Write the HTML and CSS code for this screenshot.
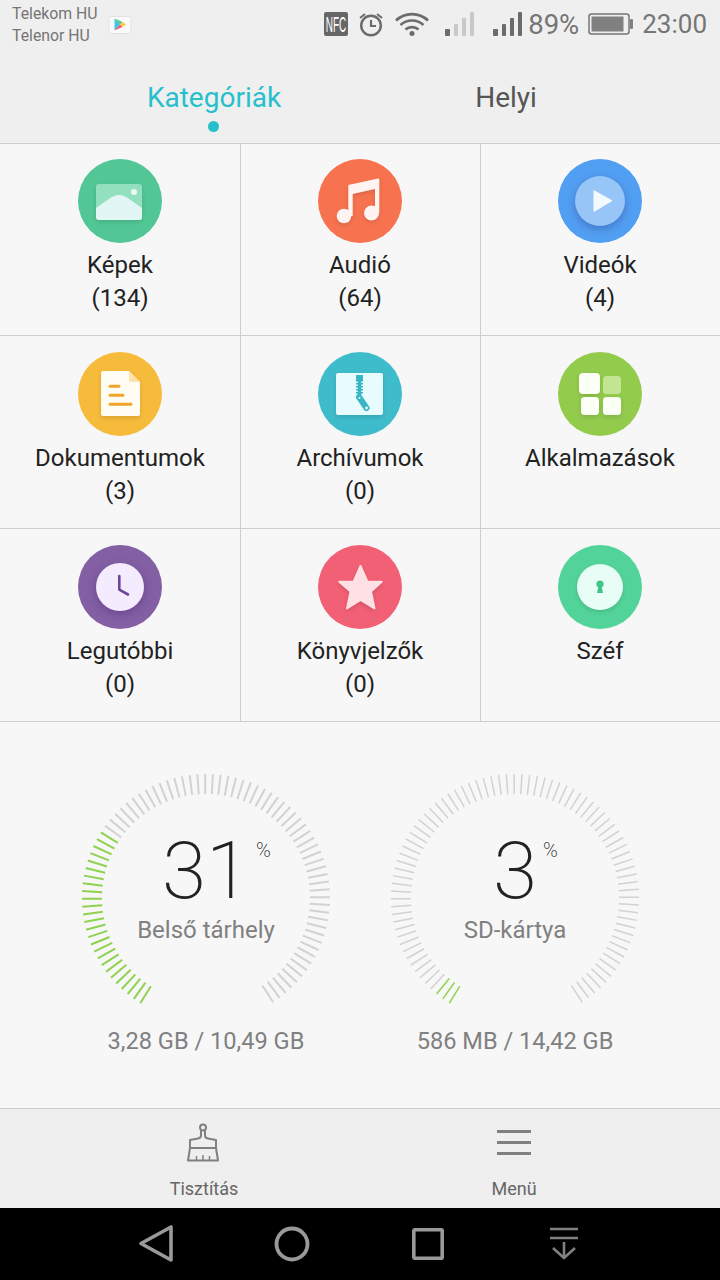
FILE: index.html
```html
<!DOCTYPE html>
<html lang="hu">
<head>
  <meta charset="UTF-8">
  <meta name="viewport" content="width=device-width, initial-scale=1.0">
  <title>Fájlok</title>
  <link rel="stylesheet" href="styles.css">
</head>
<body>
  <div class="app">
    <header class="top">
      <div class="status">
        <div class="carriers">
          <div>Telekom HU</div>
          <div>Telenor HU</div>
        </div>
        <svg class="play" width="24" height="20" viewBox="0 0 24 20">
          <rect x="1" y="2.500" width="22" height="17" rx="1.500" fill="#fafafa" stroke="#e2e2e2"/>
          <path d="M6.500 4.500v12l5.500-6z" fill="#3fc6e8"/>
          <path d="M6.500 4.500l5.500 6 2.500-2.500z" fill="#52c98a"/>
          <path d="M6.500 16.500l5.500-6 2.500 2.500z" fill="#ef5a6f"/>
          <path d="M14.500 8l3.500 2.500-3.500 2.500-2.500-2.500z" fill="#fbc93f"/>
        </svg>
        <div class="status-right">
          <svg class="nfc" width="24" height="24" viewBox="0 0 24 24">
            <rect width="24" height="24" rx="2" fill="#666"/>
            <text transform="translate(12 20) scale(1 2.200)" text-anchor="middle" class="nfc-label">NFC</text>
          </svg>
          <svg class="alarm" width="26" height="26" viewBox="0 0 26 26" fill="none" stroke="#6b6b6b">
            <circle cx="13" cy="14.500" r="9.800" stroke-width="2.400"/>
            <path d="M13 9v6h5" stroke-width="2.200"/>
            <path d="M2 7l5-4M24 7l-5-4" stroke-width="2"/>
          </svg>
          <svg class="wifi" width="34" height="24" viewBox="0 0 34 24" fill="none" stroke="#6b6b6b" stroke-width="2.600">
            <path d="M1 8.500c9-8.500 23-8.500 32 0"/>
            <path d="M5.500 13c6.500-6 16.500-6 23 0"/>
            <path d="M10.500 17.500c3.500-3.200 9.500-3.200 13 0"/>
            <circle cx="17" cy="21.500" r="2.500" fill="#6b6b6b" stroke="none"/>
          </svg>
          <svg class="signal-weak" width="29" height="24" viewBox="0 0 29 24">
            <rect x="0" y="17" width="5" height="7" rx="1" fill="#6b6b6b"/>
            <rect x="9" y="12" width="4" height="12" rx="1" fill="#c8c8c8"/>
            <rect x="17" y="6" width="4" height="18" rx="1" fill="#c8c8c8"/>
            <rect x="25" y="0" width="4" height="24" rx="1" fill="#c8c8c8"/>
          </svg>
          <svg class="signal-full" width="29" height="24" viewBox="0 0 29 24" fill="#6b6b6b">
            <rect x="0" y="17" width="5" height="7" rx="1"/>
            <rect x="9" y="12" width="4" height="12" rx="1"/>
            <rect x="17" y="6" width="4" height="18" rx="1"/>
            <rect x="25" y="0" width="4" height="24" rx="1"/>
          </svg>
          <span class="battery-pct">89%</span>
          <svg class="battery" width="45" height="22" viewBox="0 0 45 22">
            <rect x="1" y="1" width="40" height="20" rx="2.500" fill="none" stroke="#757575" stroke-width="1.500"/>
            <rect x="3.500" y="3.500" width="32" height="15" fill="#808080"/>
            <rect x="42" y="6" width="3" height="10" rx="1" fill="#808080"/>
          </svg>
          <span class="clock">23:00</span>
        </div>
      </div>
      <nav class="tabs">
        <div class="tab tab-active">Kategóriák</div>
        <div class="tab">Helyi</div>
      </nav>
    </header>

    <section class="grid">
      <div class="cell">
        <svg class="cat-icon" viewBox="0 0 84 84">
          <circle cx="42" cy="42" r="42" fill="#52c795"/>
          <g class="soft-shadow">
            <rect x="18" y="25" width="46" height="36" rx="3" fill="#93e0bf"/>
            <path d="M18 49C26 44 34 36 41 36C48 36 56 44 64 49V58a3 3 0 0 1-3 3H21a3 3 0 0 1-3-3Z" fill="#e2f6f6"/>
          </g>
          <circle cx="56" cy="33" r="3" fill="#eafaf4"/>
        </svg>
        <div class="cat-name">Képek</div>
        <div class="cat-count">(134)</div>
      </div>
      <div class="cell">
        <svg class="cat-icon" viewBox="0 0 84 84">
          <circle cx="42" cy="42" r="42" fill="#f77350"/>
          <g class="soft-shadow" fill="#fff4f1">
            <path d="M30.300 26L60 19.500q1.300 0 1.300 1.300V54H57V30L34.700 35V57H30.300Z"/>
            <circle cx="26" cy="57" r="7.300"/>
            <circle cx="53.500" cy="54" r="7.500"/>
          </g>
        </svg>
        <div class="cat-name">Audió</div>
        <div class="cat-count">(64)</div>
      </div>
      <div class="cell">
        <svg class="cat-icon" viewBox="0 0 84 84">
          <circle cx="42" cy="42" r="42" fill="#519ff2"/>
          <circle class="deep-shadow" cx="42" cy="42" r="25" fill="#97c5f8"/>
          <path d="M36 31.700L54 41.700L36 52.300Z" fill="#f4f9ff" stroke="#f4f9ff" stroke-linejoin="round"/>
        </svg>
        <div class="cat-name">Videók</div>
        <div class="cat-count">(4)</div>
      </div>

      <div class="cell">
        <svg class="cat-icon" viewBox="0 0 84 84">
          <circle cx="42" cy="42" r="42" fill="#f7bb3b"/>
          <path class="soft-shadow" d="M25 19H51L62 30V62a2 2 0 0 1-2 2H25a2 2 0 0 1-2-2V21a2 2 0 0 1 2-2Z" fill="#fffcf3"/>
          <path d="M51 19L62 30H53a2 2 0 0 1-2-2Z" fill="#fde3ab"/>
          <path d="M32 34.300H41M32 43.300H45M32 52.300H53" fill="none" stroke="#f0a429" stroke-width="3" stroke-linecap="round"/>
        </svg>
        <div class="cat-name">Dokumentumok</div>
        <div class="cat-count">(3)</div>
      </div>
      <div class="cell">
        <svg class="cat-icon" viewBox="0 0 84 84">
          <circle cx="42" cy="42" r="42" fill="#3fbccb"/>
          <rect class="soft-shadow" x="18" y="21" width="47" height="42" rx="2" fill="#e8fbfd"/>
          <path d="M38 23h7v5h-7z" fill="#3ab5c6"/>
          <path d="M41.500 28v15" stroke="#3ab5c6" stroke-width="7" stroke-dasharray="1.500 1.500" fill="none"/>
          <path d="M41.500 28v15" stroke="#3ab5c6" stroke-width="3.500" fill="none"/>
          <path d="M41 45L48.500 56" stroke="#3ab5c6" stroke-width="6" stroke-linecap="round" fill="none"/>
          <circle cx="48.500" cy="56" r="1.400" fill="#e8fbfd"/>
          <circle cx="41.500" cy="46" r="1" fill="#e8fbfd"/>
        </svg>
        <div class="cat-name">Archívumok</div>
        <div class="cat-count">(0)</div>
      </div>
      <div class="cell">
        <svg class="cat-icon" viewBox="0 0 84 84">
          <circle cx="42" cy="42" r="42" fill="#93cb4d"/>
          <g class="soft-shadow" fill="#fbfff6">
            <rect x="21" y="21" width="21" height="21" rx="4"/>
            <rect x="23" y="45" width="18" height="18" rx="3.500"/>
            <rect x="45" y="45" width="18" height="18" rx="3.500"/>
          </g>
          <rect x="45" y="24" width="18" height="18" rx="3.500" fill="#c2e592"/>
        </svg>
        <div class="cat-name">Alkalmazások</div>
      </div>

      <div class="cell">
        <svg class="cat-icon" viewBox="0 0 84 84">
          <circle cx="42" cy="42" r="42" fill="#835fa3"/>
          <circle class="deep-shadow" cx="42" cy="42" r="24" fill="#f4ebff"/>
          <path d="M41.300 31V44.700L50 49.500" fill="none" stroke="#6b479a" stroke-width="2.600" stroke-linecap="round" stroke-linejoin="round"/>
        </svg>
        <div class="cat-name">Legutóbbi</div>
        <div class="cat-count">(0)</div>
      </div>
      <div class="cell">
        <svg class="cat-icon" viewBox="0 0 84 84">
          <circle cx="42" cy="42" r="42" fill="#f26075"/>
          <path class="soft-shadow" d="M42.500 21L49.500 36.700H63.700L53 46.500L56.500 63.500L42.500 55L29 63.500L32.500 46.500L21.300 36.700H35.500Z" fill="#ffe0e4" stroke="#ffe0e4" stroke-width="2" stroke-linejoin="round"/>
        </svg>
        <div class="cat-name">Könyvjelzők</div>
        <div class="cat-count">(0)</div>
      </div>
      <div class="cell">
        <svg class="cat-icon" viewBox="0 0 84 84">
          <circle cx="42" cy="42" r="42" fill="#52d39a"/>
          <circle class="soft-shadow" cx="42" cy="42" r="23" fill="#e7fdf5"/>
          <circle cx="42" cy="39" r="3.600" fill="#3ec68a"/>
          <path d="M40.700 40h2.600l1.700 8h-6z" fill="#3ec68a"/>
        </svg>
        <div class="cat-name">Széf</div>
      </div>
    </section>

    <section class="storage">
      <div class="store">
        <div class="gauge">
          <svg class="gauge-ticks" width="250" height="250" viewBox="-125 -125 250 250" data-percent="31" data-stroke="2"></svg>
          <div class="gauge-text">
            <div class="gauge-num">31<span class="gauge-unit">%</span></div>
            <div class="gauge-label">Belső tárhely</div>
          </div>
        </div>
        <div class="store-size">3,28 GB / 10,49 GB</div>
      </div>
      <div class="store">
        <div class="gauge">
          <svg class="gauge-ticks" width="250" height="250" viewBox="-125 -125 250 250" data-percent="3" data-stroke="1.500"></svg>
          <div class="gauge-text">
            <div class="gauge-num">3<span class="gauge-unit">%</span></div>
            <div class="gauge-label">SD-kártya</div>
          </div>
        </div>
        <div class="store-size">586 MB / 14,42 GB</div>
      </div>
    </section>

    <footer class="actions">
      <div class="action">
        <svg width="34" height="40" viewBox="0 0 34 40" fill="none" stroke="#808080" stroke-width="2" stroke-linejoin="round">
          <circle cx="16" cy="5.500" r="3"/>
          <path d="M14 8.500V13.500Q14 16 11 16.500L3 18V26H29V18L21 16.500Q18 16 18 13.500V8.500"/>
          <path d="M3 26L1 38.500H31L29 26"/>
          <path d="M9.500 34V38M16 33V38M22.500 34V38" stroke-width="1.500"/>
        </svg>
        <span class="action-name">Tisztítás</span>
      </div>
      <div class="action">
        <svg width="34" height="40" viewBox="0 0 34 40" fill="#808080">
          <rect x="0" y="8" width="34" height="3"/>
          <rect x="0" y="19" width="34" height="3"/>
          <rect x="0" y="30" width="34" height="3"/>
        </svg>
        <span class="action-name">Menü</span>
      </div>
    </footer>

    <nav class="softkeys">
      <div class="softkey">
        <svg width="36" height="40" viewBox="0 0 36 40" fill="none" stroke="#999" stroke-width="3.600" stroke-linejoin="round">
          <path d="M33 3V36L3 19.500Z"/>
        </svg>
      </div>
      <div class="softkey">
        <svg width="36" height="36" viewBox="0 0 36 36" fill="none" stroke="#999" stroke-width="3.800">
          <circle cx="18" cy="18" r="15.500"/>
        </svg>
      </div>
      <div class="softkey">
        <svg width="34" height="34" viewBox="0 0 34 34" fill="none" stroke="#999" stroke-width="3.600" stroke-linejoin="round">
          <rect x="2.800" y="2.800" width="28.400" height="28.400" rx="1"/>
        </svg>
      </div>
      <div class="softkey">
        <svg width="30" height="34" viewBox="0 0 30 34" fill="none" stroke="#808080" stroke-width="2.600">
          <path d="M1 2H29M1 11H29"/>
          <path d="M15 15V31M4 21L15 31L26 21"/>
        </svg>
      </div>
    </nav>
  </div>
  <script src="gauges.js"></script>
</body>
</html>
```

FILE: styles.css
```css
* {
  box-sizing: border-box;
}
html, body {
  margin: 0;
  padding: 0;
}
body {
  font-family: Roboto, sans-serif;
  color: #222;
  background: #f7f7f7;
}
.app {
  width: 720px;
  height: 1280px;
  display: flex;
  flex-direction: column;
  overflow: hidden;
}

/* status bar + tabs */
.top {
  height: 144px;
  background: #efefef;
  border-bottom: 1px solid #cdcdcd;
}
.status {
  height: 52px;
  display: flex;
  align-items: flex-start;
  padding: 0 13px 0 12px;
}
.carriers {
  width: 96px;
  padding-top: 3px;
  font-size: 15.800px;
  line-height: 22px;
  white-space: nowrap;
  color: #757575;
}
.play {
  margin-top: 14px;
}
.status-right {
  margin-left: auto;
  display: flex;
  align-items: center;
  height: 48px;
}
.nfc-label {
  font-family: "Liberation Sans", sans-serif;
  font-size: 10px;
  fill: #fff;
}
.alarm {
  margin-left: 10px;
}
.wifi {
  margin-left: 11px;
}
.signal-weak {
  margin-left: 16px;
}
.signal-full {
  margin-left: 19px;
}
.battery-pct {
  margin-left: 6px;
  font-size: 27.500px;
  color: #757575;
}
.battery {
  margin-left: 9px;
}
.clock {
  margin-left: 9px;
  font-size: 26px;
  color: #757575;
}
.tabs {
  display: flex;
  padding: 0 68px;
}
.tab {
  flex: 1;
  position: relative;
  padding-top: 28px;
  text-align: center;
  font-size: 28px;
  line-height: 36px;
  color: #555;
}
.tab-active {
  color: #26c0cc;
}
.tab-active::after {
  content: "";
  position: absolute;
  left: 50%;
  top: 69px;
  width: 11px;
  height: 11px;
  margin-left: -6px;
  border-radius: 50%;
  background: #26c0cc;
}

/* categories */
.grid {
  display: grid;
  grid-template-columns: repeat(3, 240px);
  grid-template-rows: 192px 193px 193px;
}
.cell {
  display: flex;
  flex-direction: column;
  align-items: center;
  padding-top: 16px;
  border-bottom: 1px solid #cdcdcd;
  box-shadow: 1px 0 0 #cdcdcd;
}
.cell:nth-child(-n+3) {
  padding-top: 15px;
}
.cell:nth-child(3n) {
  box-shadow: none;
}
.cat-icon {
  width: 84px;
  height: 84px;
  overflow: visible;
}
.soft-shadow {
  filter: drop-shadow(0 2px 2px rgba(0,0,0,0.12));
}
.deep-shadow {
  filter: drop-shadow(0 3px 4px rgba(40,20,100,0.3));
}
.cat-name, .cat-count {
  font-size: 24px;
  line-height: 33px;
  color: #222;
}
.cat-name {
  margin-top: 6px;
}

/* storage gauges */
.storage {
  flex: 1;
  display: flex;
  gap: 59px;
  padding: 51px 0 0 81px;
}
.store {
  width: 250px;
  display: flex;
  flex-direction: column;
  align-items: center;
}
.gauge {
  position: relative;
  width: 250px;
  height: 250px;
}
.gauge-ticks {
  display: block;
}
.gauge-text {
  position: absolute;
  inset: 0;
  display: flex;
  flex-direction: column;
  align-items: center;
  padding-top: 53px;
}
.gauge-num {
  position: relative;
  font-size: 80px;
  font-weight: 200;
  line-height: 90px;
  color: #222;
}
.gauge-unit {
  position: absolute;
  left: 100%;
  top: 12px;
  margin-left: 6px;
  font-size: 20px;
  line-height: 24px;
}
.gauge-label {
  font-size: 24px;
  line-height: 30px;
  margin-top: -1px;
  color: #808080;
}
.store-size {
  margin-top: 4px;
  font-size: 23.600px;
  line-height: 28px;
  white-space: nowrap;
  color: #808080;
}

/* bottom actions */
.actions {
  height: 100px;
  display: flex;
  padding: 0 51px 0 49px;
  background: #efefef;
  border-top: 1px solid #cdcdcd;
}
.action {
  flex: 1;
  display: flex;
  flex-direction: column;
  align-items: center;
  padding-top: 13px;
}
.action-name {
  margin-top: 16px;
  font-size: 18px;
  line-height: 22px;
  color: #666;
}

.softkeys {
  height: 72px;
  display: flex;
  align-items: center;
  padding: 0 88px;
  background: #000;
}
.softkey {
  width: 136px;
  display: flex;
  justify-content: center;
}
```

FILE: gauges.js
```js
// tick ring for the storage gauges
const TICKS = 83;
const STEP = 3.6;
const START = 32;
const OUTER = 124;
const INNER = 104;

document.querySelectorAll('.gauge-ticks').forEach(svg => {
  const percent = Number(svg.dataset.percent);
  const filled = Math.ceil(TICKS * percent / 100);
  let html = '';
  for (let i = 0; i < TICKS; i++) {
    // angle is measured clockwise from straight down
    const a = (START + i * STEP) * Math.PI / 180;
    const sin = Math.sin(a);
    const cos = Math.cos(a);
    const color = i < filled ? '#8fd24f' : '#d2d2d2';
    html += '<line x1="' + (-sin * INNER).toFixed(2) + '" y1="' + (cos * INNER).toFixed(2) +
      '" x2="' + (-sin * OUTER).toFixed(2) + '" y2="' + (cos * OUTER).toFixed(2) +
      '" stroke="' + color + '" stroke-width="' + svg.dataset.stroke + '"/>';
  }
  svg.innerHTML = html;
});
```
